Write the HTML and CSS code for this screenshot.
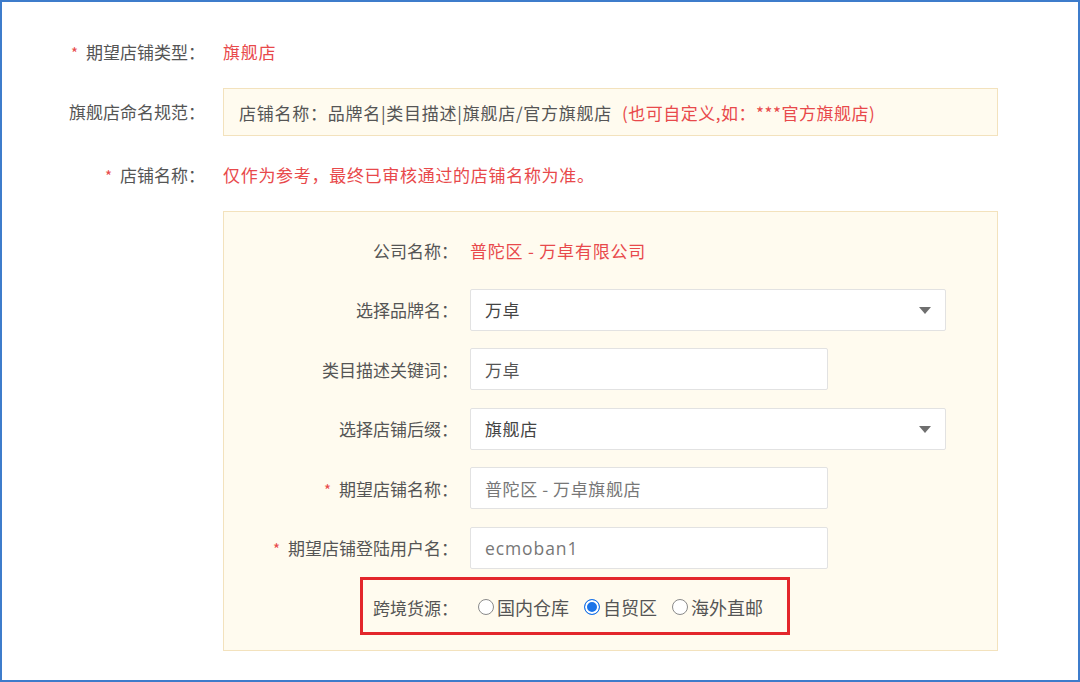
FILE: index.html
```html
<!DOCTYPE html>
<html lang="zh-CN">
<head>
    <meta charset="UTF-8">
    <title>店铺信息</title>
    <link rel="stylesheet" href="styles.css">
</head>
<body>
    <div class="frame">
        <div class="row row-type">
            <div class="label"><span class="req">*</span>期望店铺类型：</div>
            <div class="value red">旗舰店</div>
        </div>
        <div class="row row-rule">
            <div class="label">旗舰店命名规范：</div>
            <div class="rule-box">店铺名称：品牌名|类目描述|旗舰店/官方旗舰店 <span class="red">(也可自定义,如：***官方旗舰店)</span></div>
        </div>
        <div class="row row-name">
            <div class="label"><span class="req">*</span>店铺名称：</div>
            <div class="value red">仅作为参考，最终已审核通过的店铺名称为准。</div>
        </div>
        <div class="row row-box">
            <div class="label"></div>
            <div class="name-box">
                <div class="field">
                    <div class="field-label">公司名称：</div>
                    <div class="field-text red">普陀区 - 万卓有限公司</div>
                </div>
                <div class="field">
                    <div class="field-label">选择品牌名：</div>
                    <div class="select">万卓<span class="caret"></span></div>
                </div>
                <div class="field">
                    <div class="field-label">类目描述关键词：</div>
                    <div class="input">万卓</div>
                </div>
                <div class="field">
                    <div class="field-label">选择店铺后缀：</div>
                    <div class="select">旗舰店<span class="caret"></span></div>
                </div>
                <div class="field">
                    <div class="field-label"><span class="req">*</span>期望店铺名称：</div>
                    <div class="input muted">普陀区 - 万卓旗舰店</div>
                </div>
                <div class="field">
                    <div class="field-label"><span class="req">*</span>期望店铺登陆用户名：</div>
                    <div class="input muted latin">ecmoban1</div>
                </div>
                <div class="field field-source">
                    <div class="field-label">跨境货源：</div>
                    <label class="radio"><input type="radio" name="source">国内仓库</label>
                    <label class="radio"><input type="radio" name="source" checked>自贸区</label>
                    <label class="radio"><input type="radio" name="source">海外直邮</label>
                    <div class="mark"></div>
                </div>
            </div>
        </div>
    </div>
</body>
</html>
```

FILE: styles.css
```css
html, body {
    margin: 0;
    height: 100%;
}

body {
    font-family: "Noto Sans CJK SC", "Noto Sans", sans-serif;
    font-size: 17px;
    color: #555;
    background: #fff;
}

.frame {
    box-sizing: border-box;
    height: 682px;
    border: 2px solid #3d7ccb;
    padding-top: 38px;
}

.row {
    display: flex;
    align-items: center;
}

.label {
    width: 203px;
    flex: none;
    text-align: right;
    line-height: 24px;
    white-space: nowrap;
}

.value {
    margin-left: 18px;
    line-height: 24px;
    letter-spacing: 0.7px;
}

.red {
    color: #e8494b;
}

.req {
    color: #e8494b;
    font-size: 15px;
    margin-right: 8px;
}

.row-type {
    height: 24px;
}

.row-rule {
    margin-top: 24px;
}

.rule-box {
    box-sizing: border-box;
    margin-left: 18px;
    width: 775px;
    height: 48px;
    padding-left: 15px;
    display: flex;
    align-items: center;
    gap: 10px;
    background: #fffbef;
    border: 1px solid #f3e2bd;
    color: #555;
    letter-spacing: 0.75px;
}

.rule-box .red {
    letter-spacing: 0.5px;
}

.row-name {
    margin-top: 27px;
    height: 24px;
}

.row-box {
    margin-top: 24px;
    align-items: flex-start;
}

.name-box {
    box-sizing: border-box;
    margin-left: 18px;
    width: 775px;
    padding: 17px 0 22px;
    background: #fffbef;
    border: 1px solid #f3e2bd;
    display: flex;
    flex-direction: column;
    gap: 17.5px;
}

.field {
    display: flex;
    align-items: center;
    height: 42px;
    position: relative;
}

.field-label {
    width: 234px;
    flex: none;
    text-align: right;
    margin-right: 12px;
    white-space: nowrap;
}

.field-text {
    letter-spacing: 0.8px;
}

.select, .input {
    box-sizing: border-box;
    height: 42px;
    padding-left: 14px;
    display: flex;
    align-items: center;
    background: #fff;
    border: 1px solid #e2e2e2;
    border-radius: 2px;
    color: #444;
    letter-spacing: 0.6px;
}

.select {
    width: 476px;
    position: relative;
}

.input {
    width: 358px;
    color: #555;
}

.input.muted {
    color: #777;
}

.latin {
    font-family: "Open Sans", "Noto Sans", sans-serif;
    font-size: 17.5px;
    letter-spacing: 0.9px;
}

.caret {
    position: absolute;
    right: 14px;
    top: 17px;
    border-left: 6px solid transparent;
    border-right: 6px solid transparent;
    border-top: 7px solid #6f6f6f;
}

.field-source .field-label {
    margin-right: 20px;
}

.radio {
    display: flex;
    align-items: center;
    margin-right: 15px;
    font-size: 18px;
    color: #555;
}

.radio input {
    appearance: none;
    width: 16px;
    height: 16px;
    margin: 0 3px 0 0;
    border: 1px solid #8a8a8a;
    border-radius: 50%;
    background: #fff;
}

.radio input:checked {
    border-color: #1a73e8;
    background: #1a73e8;
    box-shadow: inset 0 0 0 2px #fff;
}

.mark {
    position: absolute;
    left: 136px;
    top: -9px;
    width: 430px;
    height: 58px;
    box-sizing: border-box;
    border: 3px solid #e3262b;
    pointer-events: none;
}
```
